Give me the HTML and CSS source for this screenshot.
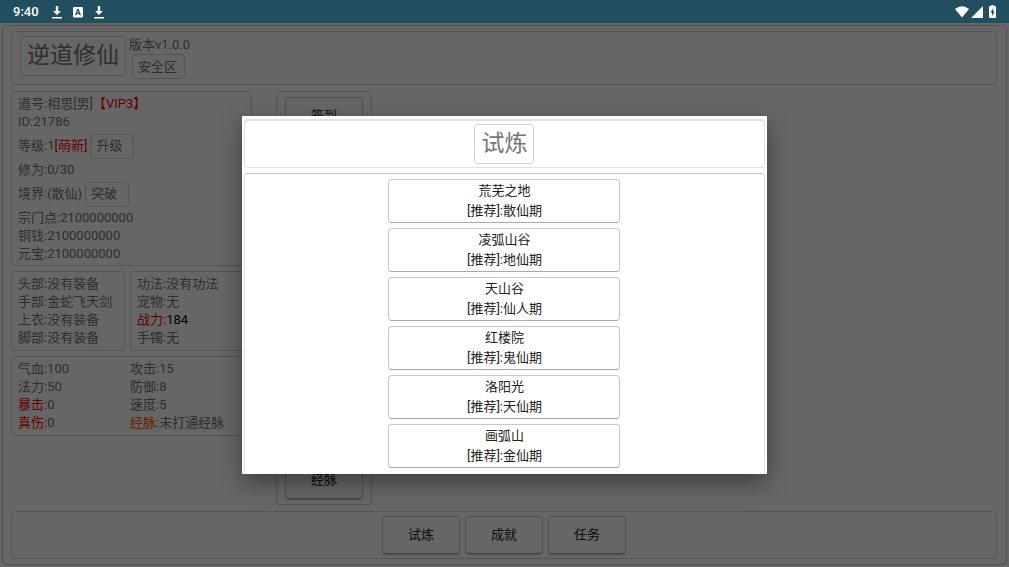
FILE: index.html
```html
<!DOCTYPE html>
<html lang="zh-CN">
<head>
    <meta charset="UTF-8">
    <meta name="viewport" content="width=device-width, initial-scale=1.0">
    <title>逆道修仙</title>
    <link rel="stylesheet" href="styles.css">
</head>
<body>
    <div class="statusBar">
        <span class="clock">9:40</span>
        <svg class="statusIcon" width="12" height="14" viewBox="0 0 12 14"><path d="M4.800 1h2.400v5H10L6 10 2 6h2.800zM1 12h10v1.400H1z"/></svg>
        <svg class="statusIcon" width="10" height="12" viewBox="0 0 10 12"><path fill-rule="evenodd" d="M1 1h8a1 1 0 0 1 1 1v8.500a1 1 0 0 1-1 1H1a1 1 0 0 1-1-1V2a1 1 0 0 1 1-1zM4.300 3L2 9.300h1.500l.4-1.300h2.200l.4 1.300H8L5.700 3zM5 4.800l.7 2.100H4.300z"/></svg>
        <svg class="statusIcon" width="12" height="14" viewBox="0 0 12 14"><path d="M4.800 1h2.400v5H10L6 10 2 6h2.800zM1 12h10v1.400H1z"/></svg>
        <div class="statusRight">
            <svg width="14" height="12" viewBox="0 0 14 12"><path d="M0 3Q7-2.500 14 3L7 11.500z"/></svg>
            <svg width="12" height="12" viewBox="0 0 12 12"><path d="M12 0v12H0z"/></svg>
            <svg class="battery" width="7" height="13" viewBox="0 0 7 13"><path fill-rule="evenodd" d="M2 0h3v1h1.300q.7 0 .7.700v10.600q0 .7-.7.700H.7q-.7 0-.7-.7V1.700Q0 1 .7 1H2zM4.300 3L1.500 7.500H3V11l2.600-4.500H4.300z"/></svg>
        </div>
    </div>

    <div class="screen">
        <main class="game">
            <header class="box topBox">
                <h1 class="titleBox">逆道修仙</h1>
                <div class="version">
                    <span>版本v1.0.0</span>
                    <button class="tag">安全区</button>
                </div>
            </header>

            <div class="middle">
                <div class="info">
                    <section class="box player">
                        <div>道号:相思[男]<span class="red">【VIP3】</span></div>
                        <div>ID:21786</div>
                        <div class="tall">等级:1<span class="red">[萌新]</span><button class="tag wide">升级</button></div>
                        <div>修为:0/30</div>
                        <div class="tall">境界:(散仙)<button class="tag wide">突破</button></div>
                        <div>宗门点:2100000000</div>
                        <div>铜钱:2100000000</div>
                        <div>元宝:2100000000</div>
                    </section>
                    <section class="gear">
                        <div class="box">
                            <div>头部:没有装备</div>
                            <div>手部:金蛇飞天剑</div>
                            <div>上衣:没有装备</div>
                            <div>脚部:没有装备</div>
                        </div>
                        <div class="box">
                            <div>功法:没有功法</div>
                            <div>宠物:无</div>
                            <div><span class="red">战力:</span><span class="black">184</span></div>
                            <div>手镯:无</div>
                        </div>
                    </section>
                    <section class="box stats">
                        <div>
                            <div>气血:100</div>
                            <div>法力:50</div>
                            <div><span class="red">暴击:</span>0</div>
                            <div><span class="red">真伤:</span>0</div>
                        </div>
                        <div>
                            <div>攻击:15</div>
                            <div>防御:8</div>
                            <div>速度:5</div>
                            <div><span class="orange">经脉:</span>未打通经脉</div>
                        </div>
                    </section>
                </div>
                <nav class="box sideMenu">
                    <button class="btn">签到</button>
                    <button class="btn">经脉</button>
                </nav>
            </div>

            <footer class="box bottomMenu">
                <button class="btn">试炼</button>
                <button class="btn">成就</button>
                <button class="btn">任务</button>
            </footer>
        </main>

        <div class="overlay">
            <div class="modal" role="dialog" aria-labelledby="modalTitle">
                <div class="box modalTop">
                    <h2 class="titleBox" id="modalTitle">试炼</h2>
                </div>
                <div class="box places">
                    <button class="place">荒芜之地<br>[推荐]:散仙期</button>
                    <button class="place">凌弧山谷<br>[推荐]:地仙期</button>
                    <button class="place">天山谷<br>[推荐]:仙人期</button>
                    <button class="place">红楼院<br>[推荐]:鬼仙期</button>
                    <button class="place">洛阳光<br>[推荐]:天仙期</button>
                    <button class="place">画弧山<br>[推荐]:金仙期</button>
                </div>
            </div>
        </div>
    </div>
</body>
</html>
```

FILE: styles.css
```css
* {
    box-sizing: border-box;
}

body {
    margin: 0;
    height: 100vh;
    display: flex;
    flex-direction: column;
    overflow: hidden;
    font-family: Roboto, "Noto Sans CJK SC", sans-serif;
    font-size: 13px;
    line-height: 18px;
    color: #757575;
    background: #fff;
}

button {
    font: inherit;
    color: inherit;
    background: #fff;
    cursor: pointer;
}

/* phone status bar */
.statusBar {
    height: 23px;
    flex: none;
    display: flex;
    align-items: center;
    gap: 10px;
    padding: 0 13px;
    color: #fff;
    background: #214f5f;
}

.statusBar svg {
    fill: #fff;
}

.clock {
    margin-right: 2px;
    font-weight: 500;
}

.statusRight {
    display: flex;
    align-items: center;
    gap: 2px;
    margin-left: auto;
}

.battery {
    margin-left: 4px;
}

/* game page */
.screen {
    flex: 1;
    min-height: 0;
    position: relative;
    padding: 2px;
}

.game {
    height: 100%;
    display: flex;
    flex-direction: column;
    gap: 6px;
    padding: 5px 9px 5px 8px;
    border: 1px solid #c8c8c8;
    border-radius: 5px;
}

.box {
    border: 1px solid #d2d2d2;
    border-radius: 4px;
}

.topBox {
    display: flex;
    gap: 3px;
    padding: 4px 8px 5px;
}

.titleBox {
    margin: 0;
    padding: 3px 6px;
    font-size: 23px;
    font-weight: 400;
    line-height: 32px;
    border: 1px solid #d2d2d2;
    border-radius: 4px;
}

.topBox .titleBox {
    align-self: flex-start;
}

.version {
    display: flex;
    flex-direction: column;
    align-items: flex-start;
}

.tag {
    height: 25px;
    margin: 0 3px;
    padding: 0 7px 0 5px;
    border: 1px solid #d2d2d2;
    border-radius: 4px;
}

.tag.wide {
    padding-right: 11px;
}

.middle {
    flex: 1;
    min-height: 0;
    display: flex;
    gap: 24px;
}

.info {
    width: 241px;
    display: flex;
    flex-direction: column;
    gap: 5px;
}

.player {
    padding: 3px 6px 2px;
}

.tall {
    display: flex;
    align-items: center;
    height: 30px;
}

.gear {
    display: grid;
    grid-template-columns: 114px 1fr;
    gap: 5px;
}

.gear .box,
.stats {
    padding: 3px 6px;
}

.stats {
    display: grid;
    grid-template-columns: 112px 1fr;
}

.sideMenu {
    display: flex;
    flex-direction: column;
    justify-content: space-between;
    padding: 5px 8px;
}

.bottomMenu {
    display: flex;
    justify-content: center;
    gap: 5px;
    padding: 4px;
}

.btn {
    width: 78px;
    height: 38px;
    color: #222;
    border: 1px solid #c8c8c8;
    border-bottom-color: #aaa;
    border-radius: 4px;
    box-shadow: 0 1px 1px rgba(0, 0, 0, 0.2);
}

.red {
    color: #f00;
}

.orange {
    color: #ff5500;
}

.black {
    color: #000;
}

/* dialog */
.overlay {
    position: absolute;
    inset: 0;
    display: flex;
    align-items: center;
    justify-content: center;
    background: rgba(0, 0, 0, 0.6);
}

.modal {
    width: 52%;
    height: 63vh;
    display: flex;
    flex-direction: column;
    gap: 5px;
    padding: 3px 2px 0;
    overflow: hidden;
    background: #fff;
    border-radius: 1px;
    box-shadow: 0 8px 22px rgba(0, 0, 0, 0.4);
}

.modalTop {
    display: flex;
    justify-content: center;
    padding: 3px;
    border-color: #e0e0e0;
    border-top-width: 2px;
}

.places {
    flex: 1;
    display: flex;
    flex-direction: column;
    align-items: center;
    gap: 5px;
    padding-top: 5px;
    border-color: #ccc #e0e0e0;
    border-bottom: none;
    border-radius: 4px 4px 0 0;
}

.place {
    width: 232px;
    flex: none;
    padding: 1px;
    line-height: 20px;
    color: #222;
    border: 1px solid #c8c8c8;
    border-bottom-color: #aaa;
    border-radius: 4px;
}
```
